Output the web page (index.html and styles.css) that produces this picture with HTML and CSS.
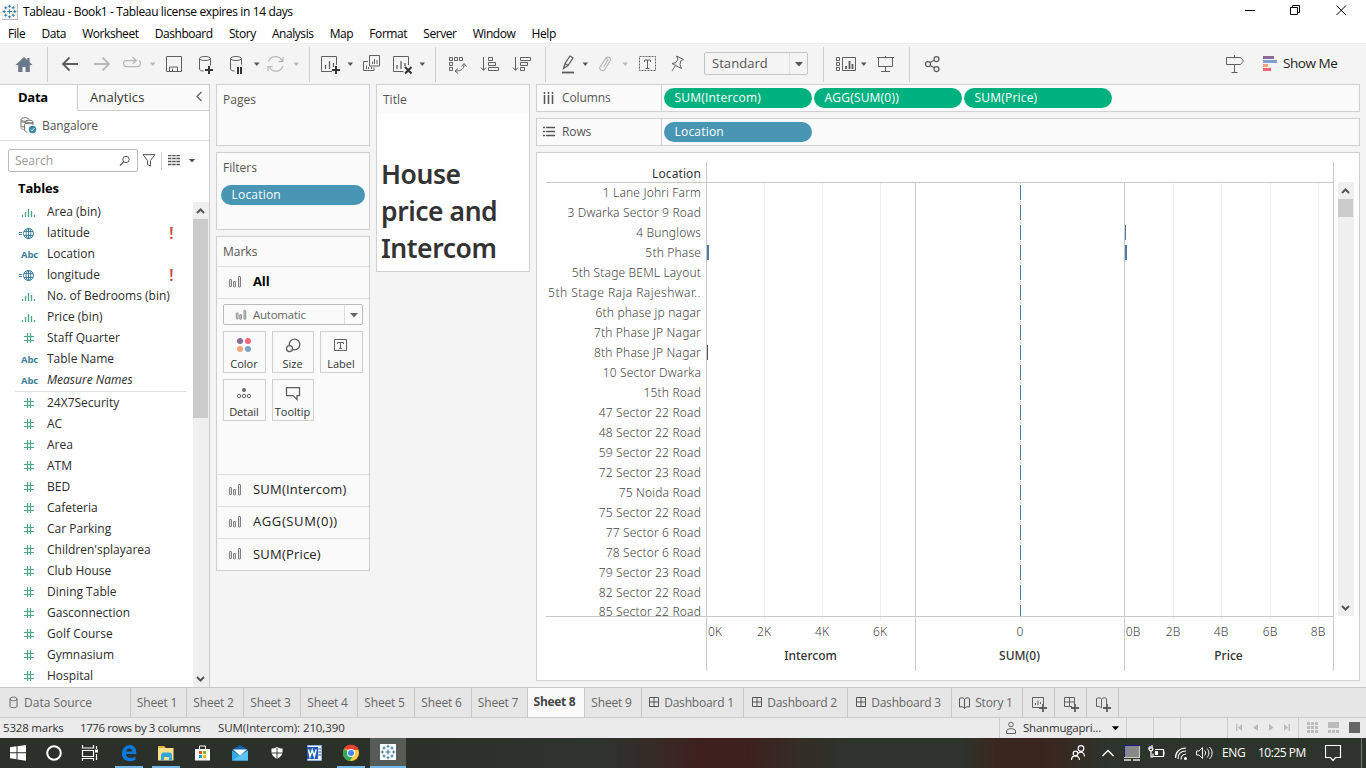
FILE: index.html
```html
<!DOCTYPE html>
<html lang="en">
<head>
<meta charset="utf-8">
<title>Tableau - Book1</title>
<link rel="stylesheet" href="styles.css">
</head>
<body>
<svg class="defs" width="0" height="0">
  <defs>
    <symbol id="logo" viewBox="0 0 16 16"><path d="M8 5.500v5M5.500 8h5M8 .8v3M6.500 2.300h3M8 12.200v3M6.500 13.700h3M.8 8h3M2.300 6.500v3M12.200 8h3M13.700 6.500v3M4 2.500v3M2.500 4h3M12 2.500v3M10.500 4h3M4 10.500v3M2.500 12h3M12 10.500v3M10.500 12h3" stroke="#377ca3" stroke-width="1.100" fill="none"/></symbol>
    <symbol id="hash" viewBox="0 0 20 20"><path d="M8.500 5v10M11.500 5v10M5 8.500h10M5 12.500h10" stroke="#4aa785" stroke-width="1.200" fill="none"/></symbol>
    <symbol id="bin" viewBox="0 0 20 20"><path d="M3.500 15v-2M6.500 15V10M9.500 15V7M12.500 15V9M15.500 15v-2" stroke="#4aa785" stroke-width="1.300" fill="none"/></symbol>
    <symbol id="globe" viewBox="0 0 20 20"><g stroke="#3d7f9c" fill="none"><circle cx="9.500" cy="10.500" r="5"/><ellipse cx="9.500" cy="10.500" rx="2.300" ry="5"/><path d="M5 8.500h9M5 12.500h9M9.500 5.500v10M0 9.500h3M0 11.500h3"/></g></symbol>
    <symbol id="bars" viewBox="0 0 14 14"><g fill="#ddd" stroke="#808080" stroke-width="1"><rect x="1.500" y="4.500" width="2" height="7" rx=".5"/><rect x="5.500" y="6.500" width="2" height="5.500" rx=".5"/><rect x="10.500" y="1.500" width="2" height="10.500" rx=".5"/></g></symbol>
    <symbol id="dash" viewBox="0 0 12 12"><path d="M1.500 1.500h9v9h-9zM6 1.500v9M1.500 6h9" stroke="#555" fill="none"/></symbol>
    <symbol id="story" viewBox="0 0 13 14"><path d="M6.500 3v9.500M6.500 3C5 1.500 3 1.500 1.500 2.500V11c2-.5 3.500-.5 5 1.500 1.500-2 3-2 5-1.500V2.500C10 1.500 8 1.500 6.500 3" stroke="#555" fill="none"/></symbol>
    <symbol id="caret" viewBox="0 0 10 6"><path d="M1 1h8L5 5.500z" fill="currentColor"/></symbol>
  </defs>
</svg>

<header class="titlebar">
  <svg class="logo" width="16" height="16"><use href="#logo"/></svg>
  <span class="apptitle">Tableau - Book1 - Tableau license expires in 14 days</span>
  <svg class="winctl" width="126" height="24" viewBox="1240 0 126 24"><path d="M1245 10.500h10M1290.500 7.500h7v7h-7zM1292.500 7.500v-2h7v7h-2M1336.500 5.500l9.500 9.500M1346 5.500l-9.500 9.500" stroke="#000" fill="none"/></svg>
</header>
<nav class="menu"><span>File</span><span>Data</span><span>Worksheet</span><span>Dashboard</span><span>Story</span><span>Analysis</span><span>Map</span><span>Format</span><span>Server</span><span>Window</span><span>Help</span></nav>

<div class="toolbar">
  <div class="group g-home">
    <svg width="47" height="41" viewBox="0 43 47 41"><path d="M24 57l-8.500 8h2.700v7h4.300v-5h3v5h4.300v-7h2.700L29.500 62v-4h-2.300v2z" fill="#6a7788"/></svg>
  </div>
  <div class="group g-nav">
    <svg width="32" height="41" viewBox="60 43 32 41"><path d="M78 64H63M69.500 57.500L63 64l6.500 6.500" class="s2"/></svg>
    <svg width="28" height="41" viewBox="92 43 28 41"><path d="M94 64h15M102.500 57.500L109 64l-6.500 6.500" class="s2 off"/></svg>
    <svg width="42" height="41" viewBox="120 43 42 41"><path d="M136 60.500h-9.500a3 3 0 0 0 0 6h11a3 3 0 0 0 1.500-5.600M132.500 57l3.800 3.500-3.800 3.500" class="s15 off"/><path d="M150 62.500h5.500l-2.700 3.500z" fill="#b8b8b8"/></svg>
    <svg width="34" height="41" viewBox="162 43 34 41"><path d="M166.500 56.500h15v15h-15zM169.500 71v-4h8v4M172.500 71v-2.500" class="s1"/></svg>
    <svg width="32" height="41" viewBox="196 43 32 41"><ellipse cx="205" cy="58.500" rx="5.500" ry="2" class="s1"/><path d="M199.500 58.500V69c0 1 1.500 2 4 2M210.500 58.500v7" class="s1"/><path d="M209 66v8M205 70h8" class="s3"/></svg>
    <svg width="36" height="41" viewBox="228 43 36 41"><ellipse cx="236" cy="58.500" rx="5.500" ry="2" class="s1"/><path d="M230.500 58.500V69c0 1 1.500 2 4 2M241.500 58.500v6" class="s1"/><path d="M238 67v7M241 67v7" class="s3"/><path d="M254 62.500h5.500l-2.700 3.500z" fill="#555"/></svg>
    <svg width="45" height="41" viewBox="264 43 45 41"><path d="M268.500 61.500a7.500 7.500 0 0 1 13.500-1M283 66a7.500 7.500 0 0 1-13.500 1.500M283 57v4.500h-4.500M268 71v-4.500h4.500" class="s15 off"/><path d="M293.500 62.500h5.500l-2.700 3.500z" fill="#b8b8b8"/></svg>
  </div>
  <div class="group g-sheet">
    <svg width="46" height="41" viewBox="310 43 46 41"><path d="M332 71.500h-10.500v-15h15V65" class="s1"/><path d="M325.500 69v-4M329.500 69v-8M333.500 67v-4" class="s15"/><path d="M336 66v8M332 70h8" class="s3"/><path d="M347.500 62.500h5.500l-2.700 3.500z" fill="#555"/></svg>
    <svg width="32" height="41" viewBox="356 43 32 41"><path d="M369.500 55.500h10V66h-10zM368 61.500h-4.500v9H374V67.500M372.500 64v-2.500M374.500 64v-5M377 64v-4M366.500 69v-3.500M368.500 69v-2M371.500 69v-2" class="s1"/></svg>
    <svg width="47" height="41" viewBox="388 43 47 41"><path d="M403.500 71.500h-10v-15h15V65" class="s1"/><path d="M397 69v-4M401 69v-8M405 66v-3" class="s15"/><path d="M405 67l6.500 6.500M411.500 67l-6.500 6.500" class="s3"/><path d="M419.500 62.500h5.500l-2.700 3.500z" fill="#555"/></svg>
  </div>
  <div class="group g-sort">
    <svg width="40" height="41" viewBox="436 43 40 41"><path d="M449.500 57.500h3v3h-3zM454.500 57.500h3v3h-3zM459.500 57.500h3v3h-3zM449.500 62.500h3v3h-3zM449.500 67.500h3v3h-3zM464 64.500c0 4-2 6.500-8.500 6.500M461.500 66.500l2.500-3 2.500 3M458 68.500l-3 2.500 3 2.500" class="s1"/></svg>
    <svg width="32" height="41" viewBox="476 43 32 41"><path d="M483.500 57v13M481 67.500l2.500 3 2.500-3M488.500 57.500h4v3h-4zM488.500 62.500h7v3h-7zM488.500 67.500h10v3h-10z" class="s1"/></svg>
    <svg width="37" height="41" viewBox="508 43 37 41"><path d="M515.500 57v13M513 67.500l2.500 3 2.500-3M520.500 57.500h10v3h-10zM520.500 62.500h7v3h-7zM520.500 67.500h4v3h-4z" class="s1"/></svg>
  </div>
  <div class="group g-mark">
    <svg width="46" height="41" viewBox="546 43 46 41"><path d="M563.500 68.500l1.500-5 5-7.500 3 2-5 7.500zM565 63.500l3 2" class="s15"/><path d="M562 72.500h12" class="s2"/><path d="M582.500 62.500h5.500l-2.700 3.500z" fill="#555"/></svg>
    <svg width="43" height="41" viewBox="592 43 43 41"><path d="M600.500 66.500l5-8c1.500-2.500 6.500-1.500 4.500 2.500l-5 8c-1.500 3-6.500 1-5-2l5-7.500c1-2 3.500-.5 2.500 1l-4 6.500" class="s15 off"/><path d="M622.500 62.500h5.500l-2.700 3.500z" fill="#b8b8b8"/></svg>
    <svg width="32" height="41" viewBox="635 43 32 41"><path d="M639.500 56.500h16v14h-16z" class="s1" stroke-dasharray="2 1"/><path d="M644.500 62v-2h6v2M647.500 60v8M645.500 68.500h4" class="s1"/></svg>
    <svg width="37" height="41" viewBox="667 43 37 41"><path d="M676.500 56l7 3.500-2.500 1-1 4 1.500 4-9.500-5 4-1 2-3.500zM675.500 65.500l-3.500 5.500" class="s1"/></svg>
    <div class="fit"><span>Standard</span><i><svg width="10" height="6"><use href="#caret"/></svg></i></div>
  </div>
  <div class="group g-view">
    <svg width="46" height="41" viewBox="824 43 46 41"><path d="M836.500 57.500h3v3h-3zM836.500 62.500h3v3h-3zM836.500 67.500h3v3h-3zM842.500 57.500h13v13h-13z" class="s1"/><path d="M846 69v-3M849.500 69v-8M852.500 69v-5" class="s2"/><path d="M861 62.500h5.500l-2.700 3.500z" fill="#555"/></svg>
    <svg width="39" height="41" viewBox="870 43 39 41"><path d="M877 57.500h17M878.500 57.500v9h14v-9M885.500 66.500v4.500M881 71.500h9M885.500 56v1" class="s1"/></svg>
  </div>
  <div class="group g-share">
    <svg width="50" height="41" viewBox="910 43 50 41"><g class="s15"><circle cx="928" cy="64" r="2.500"/><circle cx="936.500" cy="59" r="2.500"/><circle cx="936.500" cy="69" r="2.500"/><path d="M930 62.500l4-2M930 65.500l4 2"/></g></svg>
  </div>
  <div class="showme">
    <svg width="35" height="41" viewBox="1225 43 35 41"><path d="M1226.500 57.500h14l3 3.500-3 3.500h-14zM1234.500 55v2.500M1234.500 64.500V72M1231.500 72.500h6" class="s1"/></svg>
    <svg width="23" height="41" viewBox="1260 43 23 41"><path d="M1263 56h11v3h-11z" fill="#876c97"/><path d="M1263 60h14v3h-14z" fill="#7ba1cc"/><path d="M1263 64h5v3h-5z" fill="#f5a57c"/><path d="M1263 68h8v3h-8z" fill="#f9667c"/></svg>
    <span>Show Me</span>
  </div>
</div>

<main class="main">
  <aside class="side">
    <div class="sidetabs"><div class="tab-data">Data</div><div class="tab-an">Analytics<svg width="8" height="12"><path d="M6.500 2L2 6.500l4.500 4.500" stroke="#666" stroke-width="1.300" fill="none"/></svg></div></div>
    <div class="source"><svg width="18" height="17" viewBox="20 117 18 17"><g fill="none" stroke="#777"><ellipse cx="25" cy="119.500" rx="4" ry="1.800"/><path d="M21 119.500v8c0 1 1 2 2.500 2M25 122.500c-2 0-4-.5-4-1.500M24 127c-1.500 0-3-.5-3-1.500M24.500 125c0-2 3-2.500 5-2.500s3.500.8 3.500 1.800M24.500 125v5c0 1.500 1.500 2.200 3 2.200"/><ellipse cx="29" cy="122" rx="4" ry="1.800"/><path d="M33 122v3"/></g><circle cx="32.500" cy="129.500" r="3.700" fill="#3687a5"/><path d="M30.800 129.500l1.300 1.300 2.200-2.600" stroke="#fff" fill="none"/></svg><span>Bangalore</span></div>
    <div class="search"><div class="box"><span>Search</span><svg width="12" height="12"><circle cx="7" cy="4.500" r="3.200" fill="none" stroke="#555"/><path d="M4.500 7L1 10.500" stroke="#555" stroke-width="1.300"/></svg></div>
      <svg class="funnel" width="14" height="13"><path d="M1 .6h12L8.500 6.500V12l-3-1.500v-4z" fill="none" stroke="#555"/></svg><b></b>
      <svg class="list" width="12" height="11"><path d="M0 .5h12M0 3.500h12M0 6.500h12M0 9.500h12" stroke="#555" stroke-width="1.300" stroke-dasharray="3.500 .7"/></svg>
      <svg class="dn" width="8" height="5"><use href="#caret"/></svg></div>
    <h3>Tables</h3>
    <div class="fields">
      <div class="flist">
        <div class="f"><svg><use href="#bin"/></svg>Area (bin)</div>
        <div class="f"><svg><use href="#globe"/></svg>latitude<em>!</em></div>
        <div class="f"><b>Abc</b>Location</div>
        <div class="f"><svg><use href="#globe"/></svg>longitude<em>!</em></div>
        <div class="f"><svg><use href="#bin"/></svg>No. of Bedrooms (bin)</div>
        <div class="f"><svg><use href="#bin"/></svg>Price (bin)</div>
        <div class="f"><svg><use href="#hash"/></svg>Staff Quarter</div>
        <div class="f"><b>Abc</b>Table Name</div>
        <div class="f"><b>Abc</b><i>Measure Names</i></div>
        <hr>
        <div class="f"><svg><use href="#hash"/></svg>24X7Security</div>
        <div class="f"><svg><use href="#hash"/></svg>AC</div>
        <div class="f"><svg><use href="#hash"/></svg>Area</div>
        <div class="f"><svg><use href="#hash"/></svg>ATM</div>
        <div class="f"><svg><use href="#hash"/></svg>BED</div>
        <div class="f"><svg><use href="#hash"/></svg>Cafeteria</div>
        <div class="f"><svg><use href="#hash"/></svg>Car Parking</div>
        <div class="f"><svg><use href="#hash"/></svg>Children'splayarea</div>
        <div class="f"><svg><use href="#hash"/></svg>Club House</div>
        <div class="f"><svg><use href="#hash"/></svg>Dining Table</div>
        <div class="f"><svg><use href="#hash"/></svg>Gasconnection</div>
        <div class="f"><svg><use href="#hash"/></svg>Golf Course</div>
        <div class="f"><svg><use href="#hash"/></svg>Gymnasium</div>
        <div class="f"><svg><use href="#hash"/></svg>Hospital</div>
      </div>
      <div class="scroll"><svg width="16" height="17"><path d="M4 11l3.500-3.500L11 11" class="arrow"/></svg><div class="thumb tall"></div><svg class="end" width="16" height="17"><path d="M4 7l3.500 3.500L11 7" class="arrow"/></svg></div>
    </div>
  </aside>

  <section class="cards">
    <div class="card pages">Pages</div>
    <div class="card filters">Filters<div class="pill blue">Location</div></div>
    <div class="card marks">
      <div class="mh">Marks</div>
      <div class="mrow all"><svg width="14" height="14"><use href="#bars"/></svg>All</div>
      <div class="mbody">
        <div class="auto"><svg width="12" height="12"><use href="#bars"/></svg><span>Automatic</span><i><svg width="10" height="6"><use href="#caret"/></svg></i></div>
        <div class="btns">
          <div><svg width="20" height="16"><circle cx="6" cy="3" r="3" fill="#876c97"/><circle cx="14" cy="3" r="3" fill="#f9667c"/><circle cx="6" cy="11" r="3" fill="#f5a57c"/><circle cx="14" cy="11" r="3" fill="#7ba1cc"/></svg>Color</div>
          <div><svg width="20" height="16"><g class="s15"><circle cx="11.500" cy="6.500" r="5.300"/><circle cx="6.500" cy="10.500" r="3" fill="#fafafa"/></g></svg>Size</div>
          <div><svg width="20" height="16"><path d="M3.500 1.500h12v11h-12zM6.500 6V4.500h6V6M9.500 4.500V10M8 10.500h3" class="s1"/></svg>Label</div>
          <div><svg width="20" height="16"><circle cx="10" cy="4" r="2" fill="#666"/><g class="s1"><circle cx="5" cy="10" r="1.700"/><circle cx="10" cy="10" r="1.700"/><circle cx="15" cy="10" r="1.700"/></g></svg>Detail</div>
          <div><svg width="20" height="16"><path d="M3.500 1.500h13v8h-2.500v4l-4-4H3.500z" class="s15"/></svg>Tooltip</div>
        </div>
      </div>
      <div class="mrow"><svg width="14" height="14"><use href="#bars"/></svg>SUM(Intercom)</div>
      <div class="mrow agg"><svg width="14" height="14"><use href="#bars"/></svg>AGG(SUM(0))</div>
      <div class="mrow"><svg width="14" height="14"><use href="#bars"/></svg>SUM(Price)</div>
    </div>
  </section>

  <section class="titlecard"><div class="th">Title</div><h1>House<br>price and<br>Intercom</h1></section>

  <section class="work">
    <div class="shelf"><div class="sl"><svg width="12" height="12"><path d="M1.500 0v2M5.500 0v2M9.500 0v2M1.500 3v9M5.500 3v9M9.500 3v9" stroke="#555" stroke-width="1.500"/></svg>Columns</div><div class="pill green">SUM(Intercom)</div><div class="pill green">AGG(SUM(0))</div><div class="pill green">SUM(Price)</div></div>
    <div class="shelf"><div class="sl"><svg width="12" height="12"><path d="M0 1.500h2M0 5.500h2M0 9.500h2M3 1.500h9M3 5.500h9M3 9.500h9" stroke="#555" stroke-width="1.500"/></svg>Rows</div><div class="pill blue">Location</div></div>
    <div class="view">
      <div class="labels">
        <div class="lh">Location</div>
        <div class="lrows"><p>1 Lane Johri Farm</p><p>3 Dwarka Sector 9 Road</p><p>4 Bunglows</p><p>5th Phase</p><p>5th Stage BEML Layout</p><p class="wide">5th Stage Raja Rajeshwar..</p><p>6th phase jp nagar</p><p>7th Phase JP Nagar</p><p>8th Phase JP Nagar</p><p>10 Sector Dwarka</p><p>15th Road</p><p>47 Sector 22 Road</p><p>48 Sector 22 Road</p><p>59 Sector 22 Road</p><p>72 Sector 23 Road</p><p>75 Noida Road</p><p>75 Sector 22 Road</p><p>77 Sector 6 Road</p><p>78 Sector 6 Road</p><p>79 Sector 23 Road</p><p>82 Sector 22 Road</p><p class="last">85 Sector 22 Road</p></div>
      </div>
      <svg class="plot" width="628" height="509" viewBox="706 162 628 509">
        <defs><pattern id="zero" x="1020" y="183" width="1" height="20" patternUnits="userSpaceOnUse"><rect width="1" height="20" fill="#fff"/><rect width="1" height="1" fill="#ccc"/><rect y="2" width="1" height="15" fill="#4e79a7"/><rect y="18" width="1" height="2" fill="#ccc"/></pattern></defs>
        <path d="M764.500 183v438M822.500 183v438M880.500 183v438M1173.500 183v438M1221.500 183v438M1270.500 183v438M1318.500 183v438M1020.500 616v5" stroke="#f0f0f0"/>
        <path d="M706.500 162v509M915.500 183v488M1124.500 183v488M1333.500 162v509M706 182.500h628M706 616.500h628" stroke="#c9c9c9"/>
        <rect x="1020" y="183" width="1" height="433" fill="url(#zero)"/>
        <g fill="#4e79a7"><rect x="707" y="245" width="2" height="15"/><rect x="1125" y="225" width="1" height="15"/><rect x="1125" y="245" width="2" height="15"/></g>
        <rect x="707" y="345" width="1" height="15" fill="#555"/>
        <g class="ticks"><text x="715" y="636">0K</text><text x="764" y="636">2K</text><text x="822" y="636">4K</text><text x="880" y="636">6K</text><text x="1020" y="636">0</text><text x="1133" y="636">0B</text><text x="1173" y="636">2B</text><text x="1221" y="636">4B</text><text x="1270" y="636">6B</text><text x="1318" y="636">8B</text></g>
        <g class="axes"><text x="810.500" y="660">Intercom</text><text x="1019.500" y="660">SUM(0)</text><text x="1228.500" y="660">Price</text></g>
      </svg>
      <div class="scroll vscroll"><svg width="16" height="17"><path d="M4 11l3.500-3.500L11 11" class="arrow"/></svg><div class="thumb short"></div><svg class="end" width="16" height="17"><path d="M4 7l3.500 3.500L11 7" class="arrow"/></svg></div>
    </div>
  </section>
</main>

<div class="tabs">
  <div class="ds"><svg width="10" height="13"><path d="M1 3v7.500c0 1.500 7 1.500 7 0V3M1 3c0-2.500 7-2.500 7 0s-7 2-7 0" fill="none" stroke="#666"/></svg>Data Source</div>
  <div class="t56">Sheet 1</div><div>Sheet 2</div><div>Sheet 3</div><div>Sheet 4</div><div>Sheet 5</div><div>Sheet 6</div><div class="t56">Sheet 7</div><div class="on">Sheet 8</div><div>Sheet 9</div>
  <div class="t102"><svg width="12" height="12"><use href="#dash"/></svg>Dashboard 1</div><div class="t104"><svg width="12" height="12"><use href="#dash"/></svg>Dashboard 2</div><div class="t104"><svg width="12" height="12"><use href="#dash"/></svg>Dashboard 3</div>
  <div class="t71"><svg width="13" height="14"><use href="#story"/></svg>Story 1</div>
  <div class="t32"><svg width="16" height="16"><path d="M10 11.500H1.500v-10h11V8M4.500 9V7M7 9V4.500M9.500 8V6" class="s1"/><path d="M12 8v8M8 12h8" class="s2"/></svg></div>
  <div class="t32"><svg width="16" height="16"><path d="M9 10.500H1.500v-9h10V8M6.500 1.500v9M1.500 6h10" class="s1"/><path d="M12 8v8M8 12h8" class="s2"/></svg></div>
  <div class="t32"><svg width="16" height="16"><path d="M6.500 3v9M6.500 3C5 1.500 3 1.500 1.500 2.500v8c2-.5 3.500 0 5 1.500M11.500 8V2.500C10 1.500 8 1.500 6.500 3" class="s1"/><path d="M12 8v8M8 12h8" class="s2"/></svg></div>
</div>

<div class="status">
  <span class="a">5328 marks</span><span class="b">1776 rows by 3 columns</span><span class="c">SUM(Intercom): 210,390</span>
  <div class="right">
    <div class="user"><svg width="12" height="14"><circle cx="6" cy="3.500" r="2.300" class="s1"/><path d="M1.500 12.500V10c0-3 9-3 9 0v2.500z" class="s1"/></svg><span>Shanmugapri...</span><svg width="9" height="6"><use href="#caret"/></svg></div>
    <div class="e27"></div><div class="e27"></div><div class="e47"></div>
    <div class="pager"><svg width="70" height="20" viewBox="1228 718 70 20"><g fill="#bbb"><path d="M1236 724h1.300v7h-1.300zM1242 724v7l-4-3.500zM1258 724v7l-5-3.500zM1269 724v7l4.500-3.500zM1284 724v7l4-3.500zM1288.500 724h1.300v7h-1.300z"/></g></svg></div>
    <div class="modes"><svg width="67" height="20" viewBox="1299 718 67 20"><path d="M1307 723.500h11M1307 727.500h11M1307 731.500h11" stroke="#bbb" stroke-width="3" stroke-dasharray="3 1"/><path d="M1328 722h11v6h-11z" fill="#bbb"/><path d="M1328 731.500h11" stroke="#bbb" stroke-width="3" stroke-dasharray="3 1"/><path d="M1349 722h11v11h-11z" fill="#666"/></svg></div>
  </div>
</div>

<footer class="taskbar">
  <svg width="36" height="30" viewBox="0 738 36 30"><path d="M10 747.300l6.500-1v6H10zM17.500 746.200l8.500-1.200v7.300h-8.500zM10 753.300h6.500v6l-6.500-1zM17.500 753.300H26v7.500l-8.500-1.200z" fill="#fff"/></svg>
  <svg width="36" height="30" viewBox="36 738 36 30"><circle cx="54" cy="753" r="6.800" fill="none" stroke="#fff" stroke-width="2"/></svg>
  <svg width="38" height="30" viewBox="72 738 38 30"><path d="M82.500 745v3h11v-3M82.500 750.500h11v6h-11zM82.500 761v-2.500h11v2.500M96.500 746v3M96.500 754v6" fill="none" stroke="#fff" stroke-width="1.200"/><path d="M95 749.500h3v3h-3z" fill="#fff"/></svg>
  <svg width="37" height="30" viewBox="110 738 37 30"><path d="M121.500 753c1-5 4.500-8 8.500-8 4.500 0 6.500 3.500 6.300 9H126c.2 4.500 6 5 9.500 2.500v3.500c-5 2.500-13 1-13.500-5-.2-3.500 2-5.800 4-6.500-2 .7-3.500 2.500-4.500 4.500zM126.200 751.500h6c0-4-5.500-4-6 0z" fill="#0a7bdc" fill-rule="evenodd"/><path d="M115 766h28v2h-28z" fill="#76b9ed"/></svg>
  <svg width="37" height="30" viewBox="147 738 37 30"><path d="M158 746h6l1.500 2h8v12.500H158z" fill="#ffe08a"/><path d="M158 746h6l1.500 2h-7.500z" fill="#e3b344"/><path d="M161 754.500l1.500-2h8l1.500 2v6h-3v-3.500h-5v3.500h-3z" fill="#35a5dd"/><path d="M152 766h28v2h-28z" fill="#76b9ed"/></svg>
  <svg width="37" height="30" viewBox="184 738 37 30"><path d="M195 749h15v11.500h-15z" fill="#fff"/><path d="M199.500 749v-3h6v3" stroke="#fff" fill="none"/><path d="M199 751h3v3h-3z" fill="#f04e23"/><path d="M203 751h3v3h-3z" fill="#7db700"/><path d="M199 755h3v3h-3z" fill="#00a2e8"/><path d="M203 755h3v3h-3z" fill="#fdb900"/></svg>
  <svg width="37" height="30" viewBox="221 738 37 30"><path d="M232 750l8-5 8 5v10.500h-16z" fill="#0c63b3"/><path d="M232 750.500l8 5 8-5v10h-16z" fill="#35a9e8"/><path d="M232 760.500l16-10v10z" fill="#5dc2f4"/><path d="M233 749.500h14l-7 6z" fill="#fff"/></svg>
  <svg width="37" height="30" viewBox="258 738 37 30"><path d="M277 747c2 1.200 4 1.500 5.500 1.500.5 5.500-1 8-5.500 10.500-4.500-2.500-6-5-5.500-10.500 1.500 0 3.500-.3 5.500-1.500z" fill="#fff"/><path d="M277 748v11M271.500 753h11" stroke="#39423a"/></svg>
  <svg width="37" height="30" viewBox="295 738 37 30"><path d="M307.500 745.500h14v15h-14z" fill="#eaf1fb" stroke="#8fb0dc"/><path d="M318 749h3M318 752h3M318 755h3" stroke="#3a6db8"/><path d="M307 747h11v12h-11z" fill="#1e5bb5"/><path d="M308.500 749.500l1.500 7 2.200-6.500 2.200 6.500 1.700-7" fill="none" stroke="#fff" stroke-width="1.500"/></svg>
  <svg width="38" height="30" viewBox="332 738 38 30"><circle cx="351" cy="753" r="8" fill="#ffcd40"/><path d="M351 753l-7-4a8 8 0 0 0 6 12l3.500-6z" fill="#34a853"/><path d="M344 749a8 8 0 0 1 14.500 1H351z" fill="#ea4335"/><circle cx="351" cy="753" r="4" fill="#fff"/><circle cx="351" cy="753" r="3" fill="#4285f4"/><path d="M337 766h28v2h-28z" fill="#76b9ed"/></svg>
  <div class="active"><svg width="16" height="16"><use href="#logo"/></svg></div>
  <div class="tray">
    <svg width="29" height="30" viewBox="1066 738 29 30"><g fill="none" stroke="#fff" stroke-width="1.200"><circle cx="1081" cy="748.500" r="2.800"/><circle cx="1075.500" cy="753.500" r="2.300"/><path d="M1071.500 760c0-5.500 7.500-5.500 8 0M1078 753.500c3-2.500 6.500-1 6.500 3"/></g></svg>
    <svg width="27" height="30" viewBox="1095 738 27 30"><path d="M1102.500 756l5.500-5.500 5.500 5.500" stroke="#fff" stroke-width="1.300" fill="none"/></svg>
    <svg width="24" height="30" viewBox="1122 738 24 30"><path d="M1124.500 745.500h15v12h-15z" fill="#888" stroke="#1a1a8c"/><path d="M1124 757.500h16M1139.500 746v12" stroke="#ccc"/><path d="M1124 760h7M1133 760h7" stroke="#bbb" stroke-width="2"/></svg>
    <svg width="28" height="30" viewBox="1146 738 28 30"><path d="M1155 749.500h8.500v7H1153v-3M1164 751.500v3M1148 748h5M1150 746v3M1152 745v3M1149 748.500c0 3 4 3 4 0M1151 751v6h2" stroke="#fff" fill="none" stroke-width="1.200"/><path d="M1155 751h3v4h-3z" fill="#fff"/></svg>
    <svg width="20" height="30" viewBox="1174 738 20 30"><g fill="none" stroke="#fff"><path d="M1175.500 758c0-6 4-10 10.500-10M1178 759c0-5 3-8 8-8M1181 759.500c0-3 2-5.500 5-5.500" stroke-width="1.200"/></g><circle cx="1185.500" cy="758.500" r="1.500" fill="#fff"/></svg>
    <svg width="28" height="30" viewBox="1194 738 28 30"><path d="M1196.500 751h2.500l3.500-3.500v11L1199 755h-2.500zM1204.500 750.500c1.500 1.500 1.500 3.500 0 5M1207 748.500c2.500 2.500 2.500 6.500 0 9M1209.500 747c3.500 3.500 3.500 8.500 0 12" fill="none" stroke="#fff"/></svg>
    <span class="lang">ENG</span><span class="time">10:25 PM</span>
    <svg width="41" height="30" viewBox="1325 738 41 30"><path d="M1325.500 745.500h15v12h-5l-2.500 3-2.500-3h-5z" fill="none" stroke="#fff" stroke-width="1.200"/><path d="M1361.500 738v30" stroke="#777"/></svg>
  </div>
</footer>
</body>
</html>
```
FILE: styles.css
```css
* { box-sizing: border-box; }
body { margin: 0; width: 1366px; height: 768px; overflow: hidden; background: #f4f4f4; font: 12px/20px "Open Sans", "Noto Sans", sans-serif; color: #333; display: flex; flex-direction: column; }
svg { display: block; flex: none; }
.defs { height: 0; }
h1, h3, p { margin: 0; }
span, .pill, .f, .mrow, .tabs > div { white-space: nowrap; }
.s1 { fill: none; stroke: #606060; stroke-width: 1; }
.s15 { fill: none; stroke: #5c5c5c; stroke-width: 1.250; }
.s2 { fill: none; stroke: #5c5c5c; stroke-width: 1.800; }
.s3 { fill: none; stroke: #333; stroke-width: 2; }
.off { stroke: #b8b8b8; }
.arrow { fill: none; stroke: #555; stroke-width: 2; }

.titlebar { height: 24px; background: #fff; display: flex; align-items: center; flex: none; color: #000; }
.logo { margin: 0 4px 0 2px; background: #f5f5f5; border-right: 1px solid #bbb; border-bottom: 1px solid #bbb; }
.apptitle { font: 12px/24px "Open Sans", sans-serif; letter-spacing: -.37px; margin-left: 1px; }
.winctl { margin-left: auto; }
.menu { height: 19px; background: #fff; display: flex; flex: none; gap: 16.200px; padding-left: 8px; color: #000; font-size: 12px; line-height: 20px; letter-spacing: -.44px; }

.toolbar { height: 41px; flex: none; display: flex; background: #f4f4f4; border-top: 1px solid #eee; }
.toolbar svg { margin-top: -1px; }
.group { display: flex; }
.group + .group::before { content: ""; width: 1px; height: 35px; margin-top: 3px; background: #cfcfcf; }
.g-nav svg:first-of-type { margin-left: 12px; }
.fit { width: 104px; height: 23px; margin: 8px 15px 0 0; border: 1px solid #c4c4c4; border-radius: 2px; display: flex; font-size: 13px; line-height: 21px; color: #555; padding-left: 7px; letter-spacing: .05px; }
.fit i { margin-left: auto; width: 18px; border-left: 1px solid #ddd; display: flex; align-items: center; justify-content: center; }
.toolbar .fit svg { margin: 1px 0 0; }
.showme { margin-left: auto; width: 141px; display: flex; font-size: 13.500px; line-height: 39px; letter-spacing: -.45px; color: #222; }

.main { height: 603px; flex: none; display: flex; gap: 6px; }
.side { width: 210px; border-top: 1px solid #ccc; border-right: 1px solid #ccc; background: #fff; display: flex; flex-direction: column; }
.sidetabs { display: flex; height: 26px; line-height: 25px; font-size: 13px; }
.tab-data { width: 77px; padding-left: 18px; font-weight: 700; color: #000; letter-spacing: -.3px; }
.tab-an { flex: 1; border-left: 1px solid #ccc; border-bottom: 1px solid #ccc; background: #fafafa; padding-left: 12px; display: flex; letter-spacing: .1px; }
.tab-an svg { margin: 5px 6px 0 auto; }
.source { height: 30px; border-bottom: 1px solid #e0e0e0; display: flex; align-items: center; padding-left: 20px; gap: 4px; color: #555; line-height: 18px; letter-spacing: -.1px; }
.search { display: flex; margin-top: 8px; height: 23px; padding-left: 8px; align-items: center; color: #555; }
.box { width: 130px; height: 23px; border: 1px solid #bbb; border-radius: 2px; padding: 0 6px; display: flex; align-items: center; justify-content: space-between; color: #999; }
.funnel { margin-left: 4px; }
.search b { width: 1px; height: 18px; background: #ccc; margin: 0 6px 0 5px; }
.dn { margin-left: 8px; }
h3 { font-size: 13px; line-height: 20px; margin: 6px 0 0 18px; color: #000; letter-spacing: -.15px; }
.fields { margin-top: 4px; height: 485px; display: flex; }
.flist { width: 193px; }
.f { height: 21px; line-height: 20px; display: flex; padding-left: 19px; color: #2c2c2c; }
.f svg, .f b { width: 20px; height: 20px; margin-right: 8px; flex: none; }
.f b { font-size: 9.500px; color: #3d7f9c; text-indent: 2px; line-height: 21px; letter-spacing: -.1px; }
.f em { margin-left: auto; width: 24px; color: #c8483c; font: 600 17px/20px "Open Sans", sans-serif; }
.flist hr { border: 0; border-top: 1px solid #ddd; margin: 0 7px 1px 15px; }
.scroll { width: 16px; background: #efefef; display: flex; flex-direction: column; }
.scroll .end { margin-top: auto; }
.thumb { background: #cbcbcb; width: 15px; }
.tall { height: 199px; }
.short { height: 18px; }

.cards { width: 154px; display: flex; flex-direction: column; gap: 6px; color: #555; }
.card { border: 1px solid #d0d0d0; background: #fafafa; padding: 5px 0 0 6px; font-size: 12px; }
.pages { height: 62px; }
.filters { height: 78px; }
.pill { width: 148px; height: 20px; border-radius: 10px; color: #fff; line-height: 20px; padding-left: 10.500px; font-weight: 500; font-size: 12px; letter-spacing: .2px; }
.blue { background: #4896b4; }
.green { background: #00b180; }
.filters .pill { width: 144px; margin: 7px 0 0 -2px; }
.marks { height: 335px; padding: 0; }
.mh { height: 30px; line-height: 30px; padding-left: 6px; border-bottom: 1px solid #ddd; }
.mrow { height: 32px; line-height: 29px; border-bottom: 1px solid #ddd; display: flex; padding: 0 0 2px 11px; gap: 11px; align-items: center; font-size: 13px; color: #222; letter-spacing: .2px; }
.mrow:last-child { border: 0; }
.agg { letter-spacing: .6px; }
.all { font-weight: 700; color: #000; letter-spacing: -.1px; }
.mbody { height: 176px; border-bottom: 1px solid #ddd; padding: 5px 0 0 6px; }
.auto { width: 140px; height: 21px; border: 1px solid #bbb; border-radius: 2px; display: flex; align-items: center; padding-left: 11px; gap: 6px; font-size: 11.500px; letter-spacing: -.25px; color: #666; }
.auto i { margin-left: auto; width: 18px; height: 19px; border-left: 1px solid #ddd; display: flex; align-items: center; justify-content: center; }
.btns { display: grid; grid-template-columns: 43px 42px 43px; grid-auto-rows: 42px; gap: 6px; margin-top: 6px; }
.btns div { border: 1px solid #d0d0d0; display: flex; flex-direction: column; align-items: center; padding: 6px 1px 0 0; font-size: 11px; line-height: 19px; color: #333; }

.titlecard { width: 154px; height: 188px; border: 1px solid #d0d0d0; background: #fff; }
.th { height: 29px; background: #fafafa; padding: 5px 6px; color: #555; }
h1 { font: 600 26.500px/37px "Noto Sans", sans-serif; padding: 42px 0 0 4px; color: #333; letter-spacing: -.45px; white-space: nowrap; }

.work { width: 824px; display: flex; flex-direction: column; gap: 6px; }
.shelf { height: 28px; border: 1px solid #d0d0d0; background: #fafafa; display: flex; align-items: center; gap: 2px; }
.sl { width: 125px; height: 26px; border-right: 1px solid #d0d0d0; display: flex; align-items: center; gap: 7px; padding-left: 6px; color: #555; letter-spacing: -.1px; }
.view { height: 529px; border: 1px solid #d0d0d0; background: #fff; display: flex; padding: 9px 0 0 9px; font-family: "Noto Sans", sans-serif; }
.labels { width: 160px; text-align: right; }
.lh { height: 21px; line-height: 23px; padding-right: 5px; border-bottom: 1px solid #c9c9c9; color: #333; letter-spacing: .1px; }
.lrows { height: 434px; overflow: hidden; border-bottom: 1px solid #c9c9c9; }
.lrows p { height: 20px; line-height: 20px; padding-right: 5px; color: #444; white-space: nowrap; font-weight: 300; letter-spacing: .17px; }
.lrows .wide { letter-spacing: .46px; }
.lrows .last { height: 13px; line-height: 17px; }
.plot text { text-anchor: middle; font: 300 12px "Noto Sans", sans-serif; fill: #444; }
.plot .axes text { fill: #333; font-weight: 500; }
.vscroll { height: 434px; margin: 20px 0 0 4px; }

.tabs { height: 31px; flex: none; display: flex; border-top: 1px solid #c8c8c8; border-bottom: 1px solid #ccc; background: #e6e6e6; color: #666; line-height: 30px; }
.tabs > div { width: 57px; border-right: 1px solid #c8c8c8; display: flex; justify-content: center; letter-spacing: -.2px; padding-right: 3px; }
.tabs .ds { width: 131px; justify-content: flex-start; padding-left: 9px; gap: 5px; letter-spacing: 0; }
.tabs svg { margin-top: 8px; }
.tabs .t56 { width: 56px; }
.tabs .on { background: #fafafa; font-weight: 700; color: #444; line-height: 28px; letter-spacing: -.3px; }
.tabs .t102 { width: 102px; gap: 4px; }
.tabs .t104 { width: 104px; gap: 4px; }
.tabs .t71 { width: 71px; gap: 4px; }
.tabs .t32 { width: 32px; padding: 0; }
.status { height: 20px; flex: none; display: flex; background: #ebebeb; font-size: 11.500px; line-height: 20px; letter-spacing: -.1px; }
.status .a { width: 80px; padding-left: 3px; letter-spacing: -.2px; }
.status .b { width: 138px; letter-spacing: -.4px; }
.right { display: flex; margin-left: auto; color: #000; }
.right > div { border-left: 1px solid #ccc; }
.user { width: 127px; display: flex; align-items: center; padding: 0 6px 0 5px; justify-content: space-between; }
.user span { margin: 0 4px 0 0; color: #333; letter-spacing: -.2px; }
.e27 { width: 27px; }
.e47 { width: 47px; }
.pager { width: 71px; }
.modes { width: 68px; }

.taskbar { height: 30px; flex: none; display: flex; background: linear-gradient(90deg, #2b3128 0, #2b3128 400px, #2d342d 600px, #352b26 650px, #3e201e 700px, #3e201e 745px, #352a24 790px, #2d342b 850px, #2d342b 960px, #3a261e 1000px, #3a241d 1040px, #2d342b 1110px); color: #fff; }
.active { width: 36px; background: #555b56; border-bottom: 2px solid #76b9ed; display: flex; align-items: center; justify-content: center; }
.active svg { background: #fff; }
.tray { margin-left: auto; display: flex; line-height: 30px; }
.lang { width: 36px; letter-spacing: -.3px; }
.time { width: 67px; letter-spacing: -.5px; }
```
